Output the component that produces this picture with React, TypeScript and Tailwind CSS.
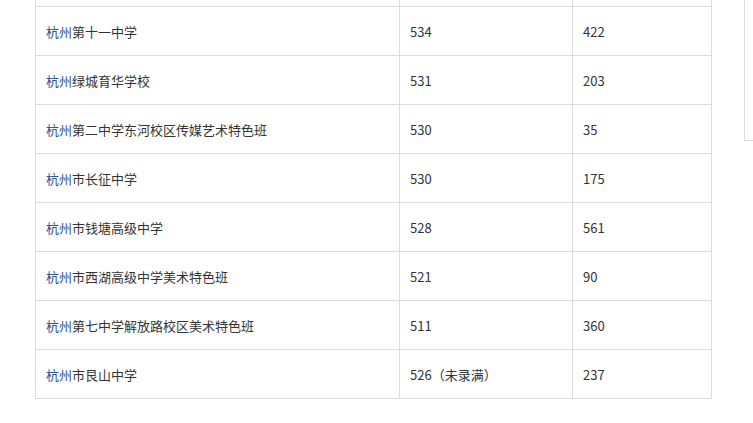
import React from "react";

const rows: [string, string, string, string][] = [
  ["杭州", "第十一中学", "534", "422"],
  ["杭州", "绿城育华学校", "531", "203"],
  ["杭州", "第二中学东河校区传媒艺术特色班", "530", "35"],
  ["杭州", "市长征中学", "530", "175"],
  ["杭州", "市钱塘高级中学", "528", "561"],
  ["杭州", "市西湖高级中学美术特色班", "521", "90"],
  ["杭州", "第七中学解放路校区美术特色班", "511", "360"],
  ["杭州", "市艮山中学", "526（未录满）", "237"],
];

export default function App() {
  return (
    <div
      className="w-[753px] h-[423px] bg-white overflow-hidden flex text-[13px] text-[#333]"
      style={{ fontFamily: '"Microsoft YaHei", "Noto Sans CJK SC", sans-serif' }}
    >
      <div className="ml-[35px] w-[677px] flex flex-col">
        <div className="flex h-[6px]">
          <div className="w-[365px] border-l border-r border-[#dcdcdc]" />
          <div className="w-[173px] border-r border-[#dcdcdc]" />
          <div className="w-[139px] border-r border-[#dcdcdc]" />
        </div>
        <div className="border-t border-[#dcdcdc]">
          {rows.map((r, i) => (
            <div key={i} className="flex h-[49px] border-b border-[#dcdcdc]">
              <div className="w-[365px] border-l border-r border-[#dcdcdc] pl-[10px] flex items-center pt-[1px]">
                <span className="text-[#2c5295]">{r[0]}</span>
                <span>{r[1]}</span>
              </div>
              <div className="w-[173px] border-r border-[#dcdcdc] pl-[10px] flex items-center pt-[1px]">
                {r[2]}
              </div>
              <div className="w-[139px] border-r border-[#dcdcdc] pl-[10px] flex items-center pt-[1px]">
                {r[3]}
              </div>
            </div>
          ))}
        </div>
      </div>
      <div className="ml-[32px] w-[20px] h-[141px] border-l border-b border-[#dcdcdc]" />
    </div>
  );
}
